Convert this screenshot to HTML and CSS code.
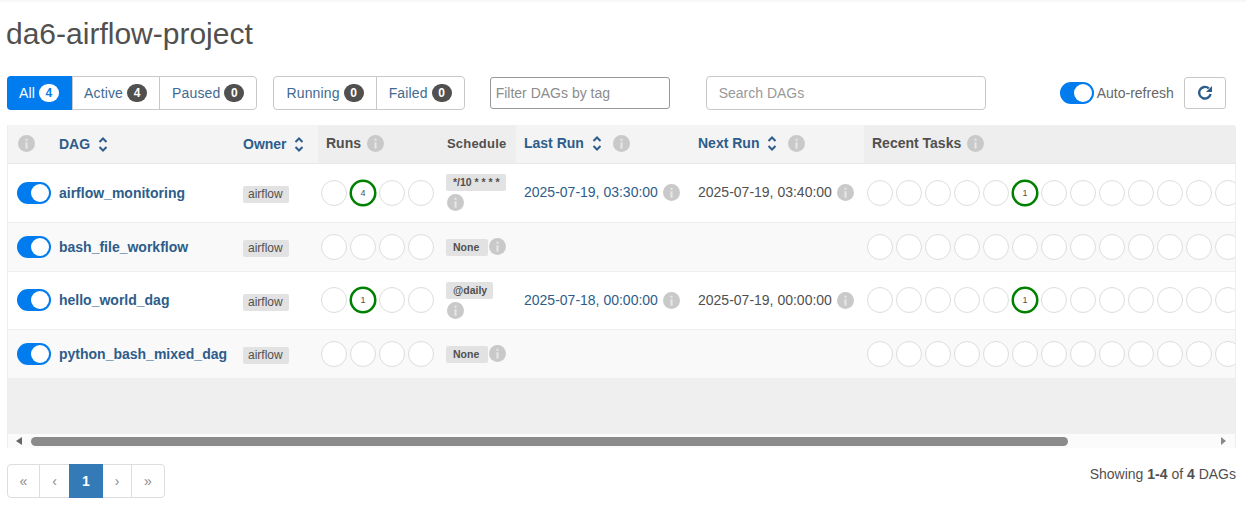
FILE: index.html
```html
<!DOCTYPE html>
<html lang="en">
<head>
    <meta charset="UTF-8">
    <title>da6-airflow-project</title>
    <link rel="stylesheet" href="styles.css">
</head>
<body>
    <svg class="defs" width="0" height="0">
        <symbol id="sort" viewBox="0 0 10 15">
            <path d="M1.5 5 L5 1.5 L8.5 5 M1.5 10 L5 13.5 L8.5 10" fill="none" stroke="currentColor" stroke-width="2"/>
        </symbol>
        <symbol id="info" viewBox="0 0 16 16">
            <circle cx="8" cy="8" r="8" fill="#c9c9c9"/>
            <rect x="7" y="3.5" width="2" height="2" fill="#e6e6e6"/>
            <rect x="7" y="6.8" width="2" height="6" fill="#e6e6e6"/>
        </symbol>
    </svg>
    <div class="topline"></div>
    <h1 class="title">da6-airflow-project</h1>

    <div class="toolbar">
        <div class="btn-group">
            <a class="filter on">All <span class="count">4</span></a>
            <a class="filter">Active <span class="count">4</span></a>
            <a class="filter">Paused <span class="count">0</span></a>
        </div>
        <div class="btn-group second">
            <a class="filter">Running <span class="count">0</span></a>
            <a class="filter">Failed <span class="count">0</span></a>
        </div>
        <input class="tag-input" type="text" placeholder="Filter DAGs by tag">
        <input class="search-input" type="text" placeholder="Search DAGs">
        <div class="auto-refresh">
            <span class="switch"></span>
            <span>Auto-refresh</span>
        </div>
        <button class="refresh">
            <svg width="16" height="16" viewBox="0 0 16 16"><path d="M13.6 9 A5.8 5.8 0 1 1 11.8 3.4" fill="none" stroke="#2d5d8a" stroke-width="2.4"/><path d="M15 1 V7 H9 Z" fill="#2d5d8a"/></svg>
        </button>
    </div>

    <div class="table-wrap">
        <table class="dags">
            <colgroup>
                <col class="c-toggle"><col class="c-dag"><col class="c-owner"><col class="c-runs"><col class="c-sched"><col class="c-date"><col class="c-date"><col class="c-tasks">
            </colgroup>
            <thead>
                <tr>
                    <th class="sortable"><svg class="ic"><use href="#info"/></svg></th>
                    <th class="sortable link">DAG <svg class="sort"><use href="#sort"/></svg></th>
                    <th class="sortable link">Owner <svg class="sort"><use href="#sort"/></svg></th>
                    <th>Runs <svg class="ic"><use href="#info"/></svg></th>
                    <th class="sched-head">Schedule</th>
                    <th class="sortable link">Last Run <svg class="sort"><use href="#sort"/></svg> <svg class="ic"><use href="#info"/></svg></th>
                    <th class="sortable link">Next Run <svg class="sort"><use href="#sort"/></svg> <svg class="ic"><use href="#info"/></svg></th>
                    <th>Recent Tasks <svg class="ic"><use href="#info"/></svg></th>
                </tr>
            </thead>
            <tbody>
                <tr class="tall">
                    <td class="t-cell"><span class="switch"></span></td>
                    <td><a class="dag-name">airflow_monitoring</a></td>
                    <td class="owner-cell"><span class="owner">airflow</span></td>
                    <td><div class="dots"><i></i><i class="ok">4</i><i></i><i></i></div></td>
                    <td class="sched stacked"><span class="cron">*/10 * * * *</span><svg class="ic"><use href="#info"/></svg></td>
                    <td class="date link">2025-07-19, 03:30:00 <svg class="ic"><use href="#info"/></svg></td>
                    <td class="date">2025-07-19, 03:40:00 <svg class="ic"><use href="#info"/></svg></td>
                    <td class="task-cell"><div class="dots"><i></i><i></i><i></i><i></i><i></i><i class="ok">1</i><i></i><i></i><i></i><i></i><i></i><i></i><i></i></div></td>
                </tr>
                <tr>
                    <td class="t-cell"><span class="switch"></span></td>
                    <td><a class="dag-name">bash_file_workflow</a></td>
                    <td class="owner-cell"><span class="owner">airflow</span></td>
                    <td><div class="dots"><i></i><i></i><i></i><i></i></div></td>
                    <td class="sched"><span class="cron">None</span><svg class="ic"><use href="#info"/></svg></td>
                    <td></td>
                    <td></td>
                    <td class="task-cell"><div class="dots"><i></i><i></i><i></i><i></i><i></i><i></i><i></i><i></i><i></i><i></i><i></i><i></i><i></i></div></td>
                </tr>
                <tr class="tall">
                    <td class="t-cell"><span class="switch"></span></td>
                    <td><a class="dag-name">hello_world_dag</a></td>
                    <td class="owner-cell"><span class="owner">airflow</span></td>
                    <td><div class="dots"><i></i><i class="ok">1</i><i></i><i></i></div></td>
                    <td class="sched stacked"><span class="cron">@daily</span><svg class="ic"><use href="#info"/></svg></td>
                    <td class="date link">2025-07-18, 00:00:00 <svg class="ic"><use href="#info"/></svg></td>
                    <td class="date">2025-07-19, 00:00:00 <svg class="ic"><use href="#info"/></svg></td>
                    <td class="task-cell"><div class="dots"><i></i><i></i><i></i><i></i><i></i><i class="ok">1</i><i></i><i></i><i></i><i></i><i></i><i></i><i></i></div></td>
                </tr>
                <tr>
                    <td class="t-cell"><span class="switch"></span></td>
                    <td><a class="dag-name">python_bash_mixed_dag</a></td>
                    <td class="owner-cell"><span class="owner">airflow</span></td>
                    <td><div class="dots"><i></i><i></i><i></i><i></i></div></td>
                    <td class="sched"><span class="cron">None</span><svg class="ic"><use href="#info"/></svg></td>
                    <td></td>
                    <td></td>
                    <td class="task-cell"><div class="dots"><i></i><i></i><i></i><i></i><i></i><i></i><i></i><i></i><i></i><i></i><i></i><i></i><i></i></div></td>
                </tr>
            </tbody>
        </table>
        <div class="empty"></div>
        <div class="scrollbar">
            <span class="arrow left"></span>
            <span class="thumb"></span>
            <span class="arrow right"></span>
        </div>
    </div>

    <div class="footer">
        <ul class="pager">
            <li>«</li>
            <li>‹</li>
            <li class="current">1</li>
            <li>›</li>
            <li>»</li>
        </ul>
        <p class="showing">Showing <b>1-4</b> of <b>4</b> DAGs</p>
    </div>
</body>
</html>
```

FILE: styles.css
```css
* {
    box-sizing: border-box;
}

html, body {
    height: 505px;
    overflow: hidden;
}

body {
    margin: 0;
    padding: 0 10px 0 7px;
    background-color: #fff;
    color: #51504f;
    font-family: "Liberation Sans", Arial, sans-serif;
    font-size: 14px;
}

.defs {
    position: absolute;
}

.topline {
    height: 3px;
    margin: 0 -10px 0 -7px;
    background: linear-gradient(#f4f4f4, #fff);
}

.title {
    margin: 14px 0 0 -1px;
    height: 59px;
    font-size: 30px;
    font-weight: 400;
    line-height: 34px;
    color: #51504f;
}

/* filters */
.toolbar {
    display: flex;
    align-items: center;
    height: 34px;
}

.btn-group {
    display: flex;
    height: 34px;
    border: 1px solid #c8c8c8;
    border-radius: 4px;
}

.btn-group.second {
    margin-left: 16px;
}

.filter {
    display: flex;
    align-items: center;
    gap: 4px;
    padding: 0 12px;
    color: #3f6a91;
    letter-spacing: 0.15px;
    border-left: 1px solid #c8c8c8;
}

.filter:first-child {
    border-left: none;
}

.filter.on {
    margin: -1px 0 -1px -1px;
    padding-right: 13px;
    background-color: #017cee;
    color: #fff;
    border-radius: 4px 0 0 4px;
}

.filter.on + .filter {
    padding-left: 11px;
}

.count {
    min-width: 20px;
    height: 18px;
    padding: 0 6px;
    border-radius: 9px;
    background-color: #51504f;
    color: #fff;
    font-size: 12px;
    font-weight: 700;
    line-height: 18px;
    text-align: center;
}

.on .count {
    background-color: #fff;
    color: #017cee;
}

input {
    font-family: inherit;
    font-size: 14px;
    outline: none;
}

input::placeholder {
    color: #8c8c8c;
    opacity: 1;
}

.tag-input {
    width: 180px;
    height: 32px;
    margin-left: 25px;
    padding: 0 5px;
    border: 1px solid #999;
    border-radius: 3px;
}

.search-input {
    width: 280px;
    height: 34px;
    margin-left: 36px;
    padding: 0 12px;
    border: 1px solid #c8c8c8;
    border-radius: 4px;
}

.search-input::placeholder {
    color: #999;
}

.auto-refresh {
    display: flex;
    align-items: center;
    gap: 3px;
    margin-left: 74px;
    color: #666;
}

.switch {
    display: block;
    position: relative;
    width: 34px;
    height: 22px;
    border-radius: 11px;
    background-color: #017cee;
}

.switch::after {
    content: "";
    position: absolute;
    top: 2px;
    right: 2px;
    width: 18px;
    height: 18px;
    border-radius: 50%;
    background-color: #fff;
}

.refresh {
    display: flex;
    align-items: center;
    justify-content: center;
    width: 42px;
    height: 32px;
    margin-left: 10px;
    padding: 0 0 1px;
    background-color: #fff;
    border: 1px solid #c8c8c8;
    border-radius: 3px;
}

/* table */
.table-wrap {
    width: 1229px;
    height: 323px;
    margin-top: 15px;
    overflow: hidden;
    border-right: 1px solid #eee;
    border-left: 1px solid #eee;
    border-radius: 0 4px 0 0;
    background-color: #efefef;
}

.dags {
    width: 1227px;
    table-layout: fixed;
    border-collapse: collapse;
}

.c-toggle { width: 43px; }
.c-dag { width: 184px; }
.c-owner { width: 83px; }
.c-runs { width: 121px; }
.c-sched { width: 77px; }
.c-date { width: 174px; }

th {
    height: 38px;
    padding: 0 8px;
    background-color: #eee;
    border-bottom: 1px solid #e8e8e8;
    color: #51504f;
    font-size: 14px;
    font-weight: 700;
    text-align: left;
    white-space: nowrap;
}

th.sortable {
    background-color: #f4f4f4;
}

th.link {
    color: #2d5d8a;
}

th .ic {
    margin-left: 2px;
}

th .sort + .ic {
    margin-left: 7px;
}

th.sched-head {
    font-size: 13px;
    letter-spacing: 0.2px;
}

.sort {
    width: 10px;
    height: 15px;
    margin-left: 4px;
    vertical-align: -3px;
    color: #2d5d8a;
}

.ic {
    width: 17px;
    height: 17px;
    vertical-align: -4px;
}

td {
    height: 49px;
    padding: 0 8px;
    background-color: #f9f9f9;
    border-bottom: 1px solid #eee;
    white-space: nowrap;
}

.tall td {
    height: 58px;
    background-color: #fff;
}

.tall:first-child td {
    height: 59px;
}

.t-cell {
    padding-left: 9px;
}

.dag-name {
    color: #2d5d8a;
    font-weight: 700;
}

.owner-cell {
    padding-top: 3px;
}

.owner {
    display: inline-block;
    padding: 0 6px 0 5px;
    height: 17px;
    border-radius: 2px;
    background-color: #e2e2e2;
    color: #51504f;
    font-size: 12px;
    line-height: 17px;
}

.dots {
    display: flex;
    gap: 3px;
    margin-left: -5px;
}

.dots i {
    display: flex;
    flex: none;
    align-items: center;
    justify-content: center;
    width: 26px;
    height: 26px;
    border: 1.5px solid #ddd;
    border-radius: 50%;
    background-color: #fff;
    color: #51504f;
    font-size: 9px;
    font-style: normal;
}

.dots i.ok {
    border: 2px solid #008000;
    box-shadow: 0 0 0 0.5px #008000;
}

.task-cell {
    overflow: hidden;
}

.sched {
    padding: 0 0 0 7px;
    white-space: normal;
    line-height: 0;
}

.cron {
    display: inline-block;
    min-width: 42px;
    height: 17px;
    padding: 0 6px 0 7px;
    border-radius: 2px;
    background-color: #e2e2e2;
    color: #51504f;
    font-size: 10.5px;
    font-weight: 700;
    line-height: 17px;
}

.sched .ic {
    margin: 0 0 0 1px;
}

.sched.stacked .ic {
    display: block;
    margin: 3px 0 0 1px;
}

.date {
    line-height: 17px;
}

.date .ic {
    margin-left: 1px;
}

.date.link {
    color: #2d5d8a;
}

.empty {
    height: 55px;
}

/* scroll bar, drawn */
.scrollbar {
    display: flex;
    align-items: center;
    height: 15px;
    background-color: #fbfbfb;
}

.thumb {
    width: 1037px;
    height: 9px;
    margin-left: 9px;
    border-radius: 5px;
    background-color: #8b8b8b;
}

.arrow {
    width: 0;
    height: 0;
    border-top: 4.5px solid transparent;
    border-bottom: 4.5px solid transparent;
}

.arrow.left {
    margin-left: 8px;
    border-right: 6px solid #666;
}

.arrow.right {
    margin-left: 153px;
    border-left: 5px solid #888;
}

/* footer */
.footer {
    display: flex;
    justify-content: space-between;
    align-items: flex-start;
    width: 1229px;
    margin-top: 16px;
}

.pager {
    display: flex;
    height: 34px;
    margin: 0;
    padding: 0;
    list-style: none;
    border: 1px solid #ddd;
    border-radius: 4px;
    color: #8a8a8a;
}

.pager li {
    display: flex;
    align-items: center;
    justify-content: center;
    width: 30px;
    border-left: 1px solid #ddd;
}

.pager li:first-child {
    width: 31px;
    border-left: none;
}

.pager li:last-child {
    width: 33px;
}

.pager .current {
    width: 34px;
    margin: -1px 0;
    border-left: none;
    background-color: #337ab7;
    color: #fff;
    font-weight: 700;
}

.pager .current + li {
    width: 28px;
    border-left: none;
}

.showing {
    margin: 2px 0 0;
    color: #51504f;
}
```
